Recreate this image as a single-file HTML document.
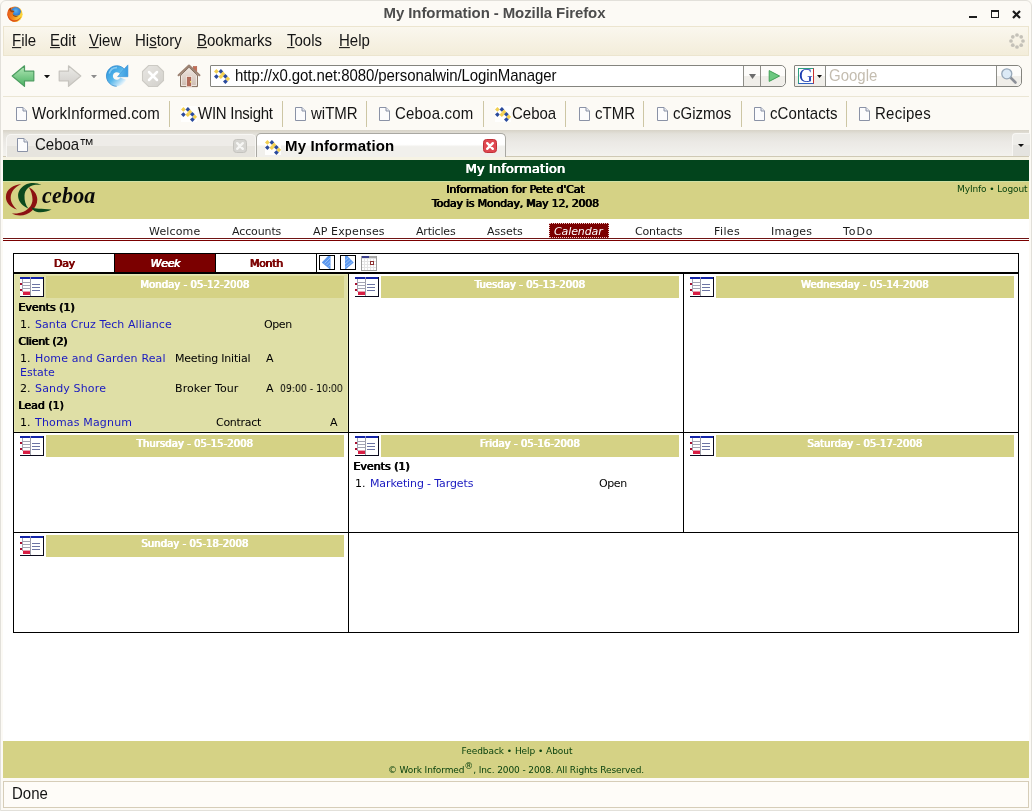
<!DOCTYPE html>
<html>
<head>
<meta charset="utf-8">
<title>My Information - Mozilla Firefox</title>
<style>
html,body{margin:0;padding:0;}
body{width:1032px;height:811px;position:relative;overflow:hidden;background:#fcfaf5;font-family:"DejaVu Sans","Liberation Sans",sans-serif;color:#000;}
.abs{position:absolute;}
.t{position:absolute;white-space:nowrap;line-height:1;will-change:transform;}
.ui{font-family:"Liberation Sans","DejaVu Sans",sans-serif;font-size:15px;color:#141414;transform:scaleY(1.06);transform-origin:0 84.6%;}
.fb{text-shadow:0.9px 0 0 currentColor,0.45px 0 0 currentColor;}
.menu{top:33px;}
.bm{top:106px;}
.bmsep{position:absolute;top:101px;width:1px;height:26px;background:#cdc6a4;}
.nav{top:226px;font-size:11px;color:#1c1c1c;}
.r{font-size:11px;color:#000;}
.lnk{color:#1a1ac0;}
.dh{will-change:transform;position:absolute;height:22px;background:#d5d285;color:#fff;font-size:10px;text-align:center;line-height:22px;white-space:nowrap;}
.ft{left:3px;width:1026px;text-align:center;font-size:9px;color:#0a420e;}
.vl{position:absolute;width:1px;background:#000;}
.hl{position:absolute;height:1px;background:#000;}
</style>
</head>
<body>
<!-- window frame -->
<div class="abs" style="left:0;top:0;width:1032px;height:811px;box-sizing:border-box;border:1px solid #e2e0da;border-radius:6px 6px 0 0;"></div>
<svg class="abs" style="left:7px;top:6px" width="16" height="16" viewBox="0 0 16 16">
<defs><radialGradient id="fx" cx="0.5" cy="0.35" r="0.65"><stop offset="0" stop-color="#5cb4f2"/><stop offset="1" stop-color="#1a5cbc"/></radialGradient>
<linearGradient id="fo" x1="0" y1="0" x2="1" y2="0.3"><stop offset="0" stop-color="#e4521a"/><stop offset="0.55" stop-color="#f48a1c"/><stop offset="1" stop-color="#fcd43a"/></linearGradient></defs>
<circle cx="8" cy="8.2" r="7.6" fill="url(#fo)"/>
<circle cx="8.8" cy="6.4" r="5.3" fill="url(#fx)"/>
<path d="M0.5 6.4C0.9 3.8 2.4 2 4.2 1.6C3.6 2.8 3.8 3.9 4.7 4.6C6.1 4.3 7.2 4.9 7.2 6C6 6.5 5.5 7.6 6.3 8.6C7.6 10 10 10.2 12.2 9C13.3 8 13.8 6.6 13.6 5.4C15 7.5 15.2 10.6 13.6 12.9C11.8 15.4 8.5 16.5 5.5 15.4C2.2 14.2 0.1 10.6 0.5 6.4Z" fill="url(#fo)"/>
<path d="M2.2 3.2C3 2.2 3.6 1.8 4.2 1.6C3.6 2.8 3.8 3.9 4.7 4.6C6.1 4.3 7.2 4.9 7.2 6C6 6.3 5.2 6.4 4.2 6C3.2 5.4 2.4 4.4 2.2 3.2Z" fill="#7a3410" opacity="0.75"/>
<path d="M5.6 8C6.4 9.8 9 10.6 11.6 9.4C9.6 11.4 6 11 5.6 8Z" fill="#4a1c08" opacity="0.8"/>
<path d="M0.6 7.5C1 11 3.4 13.6 6.8 14.2C9.8 14.6 12.4 13.2 13.8 10.6C13.4 13.4 10.4 16 6.8 15.7C3 15.2 0.3 11.6 0.6 7.5Z" fill="#d43c14" opacity="0.8"/>
</svg>
<div class="t ui" style="left:0;width:989px;top:5px;text-align:center;font-weight:bold;color:#4c4c4c;letter-spacing:-0.1px;transform:scaleY(1.02);">My Information - Mozilla Firefox</div>
<div class="abs" style="left:969px;top:16px;width:8px;height:2px;background:#1e1e1e;"></div>
<div class="abs" style="left:991px;top:10px;width:8px;height:8px;box-sizing:border-box;border:1px solid #1e1e1e;border-top-width:2px;"></div>
<svg class="abs" style="left:1012px;top:10px" width="9" height="9" viewBox="0 0 9 9"><path d="M1 1L8 8M8 1L1 8" stroke="#1a1a1a" stroke-width="2.2"/></svg>
<!-- menubar -->
<div class="abs" style="left:3px;top:26px;width:1026px;height:30px;box-sizing:border-box;background:linear-gradient(#faf7ee,#f3edda);border:1px solid #ece5cf;"></div>
<div class="t ui menu" style="left:12px"><u>F</u>ile</div>
<div class="t ui menu" style="left:50px"><u>E</u>dit</div>
<div class="t ui menu" style="left:89px"><u>V</u>iew</div>
<div class="t ui menu" style="left:135px">Hi<u>s</u>tory</div>
<div class="t ui menu" style="left:197px"><u>B</u>ookmarks</div>
<div class="t ui menu" style="left:287px"><u>T</u>ools</div>
<div class="t ui menu" style="left:339px"><u>H</u>elp</div>
<svg class="abs" style="left:1009px;top:33px" width="16" height="16" viewBox="0 0 16 16" fill="#c4c1b8">
<circle cx="8" cy="2" r="1.85"/><circle cx="12.2" cy="3.8" r="1.85"/><circle cx="14" cy="8" r="1.85"/><circle cx="12.2" cy="12.2" r="1.85"/><circle cx="8" cy="14" r="1.85"/><circle cx="3.8" cy="12.2" r="1.85"/><circle cx="2" cy="8" r="1.85"/><circle cx="3.8" cy="3.8" r="1.85"/></svg>
<!-- nav toolbar -->
<div class="abs" style="left:3px;top:96px;width:1026px;height:1px;background:#ebe6d4;"></div>
<svg class="abs" style="left:11px;top:64px" width="24" height="24" viewBox="0 0 24 24">
<defs><linearGradient id="gb" x1="0" y1="0" x2="0" y2="1"><stop offset="0" stop-color="#b4e8b8"/><stop offset="1" stop-color="#48b060"/></linearGradient></defs>
<path d="M1.2 12L13.5 1.8V7.2H22.8V16.8H13.5V22.4Z" fill="url(#gb)" stroke="#4c9c60" stroke-width="1.2" stroke-linejoin="round"/></svg>
<svg class="abs" style="left:44px;top:75px" width="6" height="3.4" viewBox="0 0 6 3.4"><path d="M0 0H6L3 3.4Z" fill="#111"/></svg>
<svg class="abs" style="left:58px;top:64px" width="24" height="24" viewBox="0 0 24 24">
<defs><linearGradient id="gf" x1="0" y1="0" x2="0" y2="1"><stop offset="0" stop-color="#ecebe8"/><stop offset="1" stop-color="#cfcdc8"/></linearGradient></defs>
<path d="M22.8 12L10.5 1.8V7.2H1.2V16.8H10.5V22.4Z" fill="url(#gf)" stroke="#c6c4be" stroke-width="1.2" stroke-linejoin="round"/></svg>
<svg class="abs" style="left:91px;top:75px" width="6" height="3.4" viewBox="0 0 6 3.4"><path d="M0 0H6L3 3.4Z" fill="#8c8c8c"/></svg>
<svg class="abs" style="left:105px;top:64px" width="24" height="24" viewBox="0 0 24 24">
<defs><linearGradient id="gr" x1="0.1" y1="0.1" x2="0.95" y2="0.9"><stop offset="0" stop-color="#2f98de"/><stop offset="0.45" stop-color="#56b6ea"/><stop offset="0.75" stop-color="#b4def6"/><stop offset="0.92" stop-color="#f4fafd"/></linearGradient>
<linearGradient id="gr2" x1="0" y1="0" x2="1" y2="0"><stop offset="0" stop-color="#62bcee"/><stop offset="1" stop-color="#3a9ce0"/></linearGradient></defs>
<path d="M22 12A10.3 10.3 0 1 0 21.25 15.86L15.22 13.42A3.8 3.8 0 1 1 15.5 12Z" fill="url(#gr)"/>
<path d="M20.6 6.8A10.3 10.3 0 1 0 11.7 22.3" fill="none" stroke="#2c86cc" stroke-width="0.9" opacity="0.8"/>
<path d="M22.9 0.9V12.7H12.6L15 10L18.6 5.6Z" fill="url(#gr2)" stroke="#3a94d8" stroke-width="0.6" stroke-linejoin="round"/>
<path d="M4.2 9.5A8 8 0 0 1 12 3.6" fill="none" stroke="#a8dcf8" stroke-width="1.6" opacity="0.7"/>
</svg>
<svg class="abs" style="left:141px;top:64px" width="24" height="24" viewBox="0 0 24 24">
<defs><linearGradient id="gs" x1="0" y1="0" x2="1" y2="1"><stop offset="0" stop-color="#e8e6e2"/><stop offset="1" stop-color="#d2d0cb"/></linearGradient></defs><path d="M7.6 1.5H16.4L22.5 7.6V16.4L16.4 22.5H7.6L1.5 16.4V7.6Z" fill="url(#gs)" stroke="#cccac4" stroke-width="1.1"/>
<path d="M8 8L16 16M16 8L8 16" stroke="#fff" stroke-width="2.5" stroke-linecap="round"/></svg>
<svg class="abs" style="left:177px;top:64px" width="24" height="24" viewBox="0 0 24 24">
<defs><linearGradient id="gh" x1="0" y1="0" x2="0" y2="1"><stop offset="0" stop-color="#f0e8e2"/><stop offset="1" stop-color="#cdbbb0"/></linearGradient></defs>
<rect x="16.2" y="2.4" width="3.6" height="6" fill="#c46c54" stroke="#a85c48" stroke-width="0.5"/>
<path d="M3.6 11.2L12 3.2L20.4 11.2V22.6H3.6Z" fill="url(#gh)" stroke="#7c6656" stroke-width="1"/>
<path d="M4.6 12V21.6H19.4V12" fill="none" stroke="#faf4f0" stroke-width="0.9" opacity="0.9"/>
<path d="M1.6 11.2L12 1.6L22.4 11.2" fill="none" stroke="#9c8272" stroke-width="2.1" stroke-linejoin="round" stroke-linecap="round"/>
<rect x="10.2" y="13" width="3.8" height="9.2" fill="#b46c5a" stroke="#a05848" stroke-width="0.5"/>
<rect x="9.5" y="12.4" width="5.2" height="10" fill="none" stroke="#f6e4dc" stroke-width="0.7"/>
<rect x="13" y="17" width="1.2" height="1.6" fill="#f0e070"/>
</svg>
<!-- url bar -->
<div class="abs" style="left:210px;top:65px;width:576px;height:22px;box-sizing:border-box;border:1px solid #84847e;border-radius:1px 5px 5px 1px;background:#fff;"></div>
<div class="abs" style="left:744px;top:66px;width:41px;height:20px;background:linear-gradient(#fdfcfa 50%,#f0eee9 50%);border-radius:0 5px 5px 0;"></div>
<div class="abs" style="left:743px;top:66px;width:1px;height:20px;background:#8e8e88;"></div>
<div class="abs" style="left:760px;top:66px;width:1px;height:20px;background:#8e8e88;"></div>
<svg class="abs" style="left:749px;top:74px" width="7" height="5" viewBox="0 0 7 5"><path d="M0 0H7L3.5 5Z" fill="#6c6c6c"/></svg>
<svg class="abs" style="left:768px;top:69px" width="13" height="14" viewBox="0 0 13 14"><path d="M1.2 1.6L11.6 7L1.2 12.4Z" fill="#6cc880" stroke="#44a058" stroke-width="1" stroke-linejoin="round"/></svg>
<svg class="abs" style="left:214px;top:68px" width="16" height="16" viewBox="0 0 16 16"><rect width="16" height="16" fill="#fff" opacity="0.9"/><path d="M2.4 1.0L4.8 3.4L2.4 5.8L0.0 3.4Z" fill="#f2d050"/><path d="M6.9 1.0L9.3 3.4L6.9 5.8L4.5 3.4Z" fill="#2a4a9c"/><path d="M2.4 6.199999999999999L4.8 8.6L2.4 11.0L0.0 8.6Z" fill="#2a4a9c"/><path d="M6.8 6.299999999999999L9.2 8.7L6.8 11.1L4.4 8.7Z" fill="#f2d050"/><path d="M9 3.6L11.4 6L9 8.4L6.6 6Z" fill="#f2d050"/><path d="M11.4 5.9L13.8 8.3L11.4 10.700000000000001L9.0 8.3Z" fill="#2a4a9c"/><path d="M13.8 8.5L16.2 10.9L13.8 13.3L11.4 10.9Z" fill="#f2d050"/><path d="M11.4 11.2L13.8 13.6L11.4 16.0L9.0 13.6Z" fill="#2a4a9c"/></svg><div class="t ui" style="left:235px;top:68px;letter-spacing:-0.08px;color:#0a0a0a;">http://x0.got.net:8080/personalwin/LoginManager</div>
<!-- search bar -->
<div class="abs" style="left:794px;top:65px;width:228px;height:22px;box-sizing:border-box;border:1px solid #84847e;border-radius:1px 5px 5px 1px;background:#fff;"></div>
<div class="abs" style="left:795px;top:66px;width:30px;height:20px;background:linear-gradient(#fdfcfa 50%,#f0eee9 50%);"></div>
<div class="abs" style="left:825px;top:66px;width:1px;height:20px;background:#8e8e88;"></div>
<div class="abs" style="left:997px;top:66px;width:24px;height:20px;background:linear-gradient(#fdfcfa 50%,#f0eee9 50%);border-radius:0 5px 5px 0;"></div>
<div class="abs" style="left:996px;top:66px;width:1px;height:20px;background:#8e8e88;"></div>
<div class="abs" style="left:798px;top:68px;width:16px;height:16px;box-sizing:border-box;background:#fff;border:1px solid #30a080;border-right-color:#c83030;border-bottom-color:#3060c0;"></div>
<div class="t" style="left:799px;top:66px;font-family:'Liberation Serif',serif;font-size:19px;color:#1c3cb0;">G</div>
<svg class="abs" style="left:817px;top:75px" width="5" height="3" viewBox="0 0 5 3"><path d="M0 0H5L2.5 3Z" fill="#111"/></svg>
<div class="t ui" style="left:829px;top:68px;color:#c4bdb0;">Google</div>
<svg class="abs" style="left:1000px;top:67px" width="18" height="18" viewBox="0 0 18 18">
<path d="M9 9L15.5 15.5" stroke="#8c9098" stroke-width="2.6" stroke-linecap="round"/>
<circle cx="6.8" cy="6.8" r="5" fill="#dceaf6" stroke="#98a8b8" stroke-width="1.3"/></svg>
<!-- bookmarks toolbar -->
<svg class="abs" style="left:16px;top:107px" width="12" height="15" viewBox="0 0 12 15">
<path d="M0.5 0.5H7L10.5 4V13.5H0.5Z" fill="#fcfcfd" stroke="#8a92a6" stroke-width="1"/>
<path d="M7 0.5V4H10.5" fill="#e6e9f0" stroke="#8a92a6" stroke-width="1"/>
</svg>
<div class="t ui bm" style="left:32px;letter-spacing:0.08px">WorkInformed.com</div>
<svg class="abs" style="left:180.5px;top:106px" width="16" height="16" viewBox="0 0 16 16"><rect width="16" height="16" fill="#fff" opacity="0.9"/><path d="M2.4 1.0L4.8 3.4L2.4 5.8L0.0 3.4Z" fill="#f2d050"/><path d="M6.9 1.0L9.3 3.4L6.9 5.8L4.5 3.4Z" fill="#2a4a9c"/><path d="M2.4 6.199999999999999L4.8 8.6L2.4 11.0L0.0 8.6Z" fill="#2a4a9c"/><path d="M6.8 6.299999999999999L9.2 8.7L6.8 11.1L4.4 8.7Z" fill="#f2d050"/><path d="M9 3.6L11.4 6L9 8.4L6.6 6Z" fill="#f2d050"/><path d="M11.4 5.9L13.8 8.3L11.4 10.700000000000001L9.0 8.3Z" fill="#2a4a9c"/><path d="M13.8 8.5L16.2 10.9L13.8 13.3L11.4 10.9Z" fill="#f2d050"/><path d="M11.4 11.2L13.8 13.6L11.4 16.0L9.0 13.6Z" fill="#2a4a9c"/></svg>
<div class="t ui bm" style="left:198px;letter-spacing:-0.25px">WIN Insight</div>
<svg class="abs" style="left:295px;top:107px" width="12" height="15" viewBox="0 0 12 15">
<path d="M0.5 0.5H7L10.5 4V13.5H0.5Z" fill="#fcfcfd" stroke="#8a92a6" stroke-width="1"/>
<path d="M7 0.5V4H10.5" fill="#e6e9f0" stroke="#8a92a6" stroke-width="1"/>
</svg>
<div class="t ui bm" style="left:311px;letter-spacing:0px">wiTMR</div>
<svg class="abs" style="left:379px;top:107px" width="12" height="15" viewBox="0 0 12 15">
<path d="M0.5 0.5H7L10.5 4V13.5H0.5Z" fill="#fcfcfd" stroke="#8a92a6" stroke-width="1"/>
<path d="M7 0.5V4H10.5" fill="#e6e9f0" stroke="#8a92a6" stroke-width="1"/>
</svg>
<div class="t ui bm" style="left:395px;letter-spacing:0.2px">Ceboa.com</div>
<svg class="abs" style="left:494.5px;top:106px" width="16" height="16" viewBox="0 0 16 16"><rect width="16" height="16" fill="#fff" opacity="0.9"/><path d="M2.4 1.0L4.8 3.4L2.4 5.8L0.0 3.4Z" fill="#f2d050"/><path d="M6.9 1.0L9.3 3.4L6.9 5.8L4.5 3.4Z" fill="#2a4a9c"/><path d="M2.4 6.199999999999999L4.8 8.6L2.4 11.0L0.0 8.6Z" fill="#2a4a9c"/><path d="M6.8 6.299999999999999L9.2 8.7L6.8 11.1L4.4 8.7Z" fill="#f2d050"/><path d="M9 3.6L11.4 6L9 8.4L6.6 6Z" fill="#f2d050"/><path d="M11.4 5.9L13.8 8.3L11.4 10.700000000000001L9.0 8.3Z" fill="#2a4a9c"/><path d="M13.8 8.5L16.2 10.9L13.8 13.3L11.4 10.9Z" fill="#f2d050"/><path d="M11.4 11.2L13.8 13.6L11.4 16.0L9.0 13.6Z" fill="#2a4a9c"/></svg>
<div class="t ui bm" style="left:512px;letter-spacing:0px">Ceboa</div>
<svg class="abs" style="left:579px;top:107px" width="12" height="15" viewBox="0 0 12 15">
<path d="M0.5 0.5H7L10.5 4V13.5H0.5Z" fill="#fcfcfd" stroke="#8a92a6" stroke-width="1"/>
<path d="M7 0.5V4H10.5" fill="#e6e9f0" stroke="#8a92a6" stroke-width="1"/>
</svg>
<div class="t ui bm" style="left:595px;letter-spacing:0px">cTMR</div>
<svg class="abs" style="left:657px;top:107px" width="12" height="15" viewBox="0 0 12 15">
<path d="M0.5 0.5H7L10.5 4V13.5H0.5Z" fill="#fcfcfd" stroke="#8a92a6" stroke-width="1"/>
<path d="M7 0.5V4H10.5" fill="#e6e9f0" stroke="#8a92a6" stroke-width="1"/>
</svg>
<div class="t ui bm" style="left:673px;letter-spacing:0px">cGizmos</div>
<svg class="abs" style="left:754px;top:107px" width="12" height="15" viewBox="0 0 12 15">
<path d="M0.5 0.5H7L10.5 4V13.5H0.5Z" fill="#fcfcfd" stroke="#8a92a6" stroke-width="1"/>
<path d="M7 0.5V4H10.5" fill="#e6e9f0" stroke="#8a92a6" stroke-width="1"/>
</svg>
<div class="t ui bm" style="left:770px;letter-spacing:0.1px">cContacts</div>
<svg class="abs" style="left:859px;top:107px" width="12" height="15" viewBox="0 0 12 15">
<path d="M0.5 0.5H7L10.5 4V13.5H0.5Z" fill="#fcfcfd" stroke="#8a92a6" stroke-width="1"/>
<path d="M7 0.5V4H10.5" fill="#e6e9f0" stroke="#8a92a6" stroke-width="1"/>
</svg>
<div class="t ui bm" style="left:875px;letter-spacing:0.25px">Recipes</div>
<div class="bmsep" style="left:169px"></div>
<div class="bmsep" style="left:282px"></div>
<div class="bmsep" style="left:366px"></div>
<div class="bmsep" style="left:483px"></div>
<div class="bmsep" style="left:565px"></div>
<div class="bmsep" style="left:643px"></div>
<div class="bmsep" style="left:741px"></div>
<div class="bmsep" style="left:846px"></div>
<!-- tab bar -->
<div class="abs" style="left:3px;top:130px;width:1026px;height:27px;background:linear-gradient(#d7d3c7,#e3e1da 4px,#ebe9e5 12px,#f3f2ee 26px);"></div>
<div class="abs" style="left:3px;top:156px;width:1026px;height:1px;background:#cfc9b4;"></div>
<div class="abs" style="left:3px;top:157px;width:1026px;height:3px;background:#f6f3e4;"></div>
<div class="abs" style="left:6px;top:134px;width:250px;height:23px;box-sizing:border-box;border:1px solid #f8f7f4;border-bottom:none;border-radius:5px 5px 0 0;background:linear-gradient(#eeece8 50%,#e6e4de 50%);"></div>
<div class="abs" style="left:256px;top:133px;width:250px;height:24px;box-sizing:border-box;border:1px solid #a9a8a2;border-bottom:none;border-radius:5px 5px 0 0;background:linear-gradient(#ffffff 45%,#f1f0ec 55%);"></div>
<div class="abs" style="left:1012px;top:133px;width:18px;height:23px;box-sizing:border-box;border:1px solid #f8f7f4;border-right:none;border-bottom:none;border-radius:4px 0 0 0;background:linear-gradient(#eeede9 50%,#e5e4e0 50%);"></div>
<svg class="abs" style="left:1018px;top:144px" width="6" height="3" viewBox="0 0 6 3"><path d="M0 0H6L3 3Z" fill="#111"/></svg>
<svg class="abs" style="left:17px;top:138px" width="12" height="15" viewBox="0 0 12 15">
<path d="M0.5 0.5H7L10.5 4V13.5H0.5Z" fill="#fcfcfd" stroke="#8a92a6" stroke-width="1"/>
<path d="M7 0.5V4H10.5" fill="#e6e9f0" stroke="#8a92a6" stroke-width="1"/>
</svg>
<div class="t ui" style="left:35px;top:137px;">Ceboa™</div>
<svg class="abs" style="left:233px;top:139px" width="14" height="14" viewBox="0 0 14 14"><rect x="0.5" y="0.5" width="13" height="13" rx="3" fill="#d6d5d1" stroke="#c4c3be"/><path d="M4.2 4.2L9.8 9.8M9.8 4.2L4.2 9.8" stroke="#f6f6f4" stroke-width="2.4" stroke-linecap="round"/></svg>
<svg class="abs" style="left:265px;top:139px" width="16" height="16" viewBox="0 0 16 16"><rect width="16" height="16" fill="#fff" opacity="0.9"/><path d="M2.4 1.0L4.8 3.4L2.4 5.8L0.0 3.4Z" fill="#f2d050"/><path d="M6.9 1.0L9.3 3.4L6.9 5.8L4.5 3.4Z" fill="#2a4a9c"/><path d="M2.4 6.199999999999999L4.8 8.6L2.4 11.0L0.0 8.6Z" fill="#2a4a9c"/><path d="M6.8 6.299999999999999L9.2 8.7L6.8 11.1L4.4 8.7Z" fill="#f2d050"/><path d="M9 3.6L11.4 6L9 8.4L6.6 6Z" fill="#f2d050"/><path d="M11.4 5.9L13.8 8.3L11.4 10.700000000000001L9.0 8.3Z" fill="#2a4a9c"/><path d="M13.8 8.5L16.2 10.9L13.8 13.3L11.4 10.9Z" fill="#f2d050"/><path d="M11.4 11.2L13.8 13.6L11.4 16.0L9.0 13.6Z" fill="#2a4a9c"/></svg>
<div class="t ui" style="left:285px;top:138px;font-weight:bold;color:#000;letter-spacing:0.13px;transform:scaleY(1.02);">My Information</div>
<svg class="abs" style="left:483px;top:139px" width="14" height="14" viewBox="0 0 14 14"><rect x="0.5" y="0.5" width="13" height="13" rx="3" fill="#e04850" stroke="#c03038"/><path d="M4.2 4.2L9.8 9.8M9.8 4.2L4.2 9.8" stroke="#fff" stroke-width="2.4" stroke-linecap="round"/></svg>
<!-- page content -->
<div class="abs" style="left:3px;top:160px;width:1026px;height:618px;background:#fff;"></div>
<div class="abs" style="left:3px;top:160px;width:1026px;height:21px;background:#02441c;"></div>
<div class="t fb" style="left:2px;width:1026px;top:162px;text-align:center;color:#fff;font-size:13px;letter-spacing:0.1px;">My Information</div>
<div class="abs" style="left:3px;top:181px;width:1026px;height:38px;background:#d5d285;border-top:1px solid #cfe0a4;box-sizing:border-box;"></div>
<svg class="abs" style="left:3px;top:181px" width="100" height="38" viewBox="3 181 100 38">
<path d="M21.3 184.3C14 184.5 6 189 5.9 197C5.9 203 10.5 207.5 17 209.6C13 206 10.5 202 10.7 197.3C11 191.5 15 187 21.3 184.3Z" fill="#8c1212"/>
<path d="M28.8 187.2C33.5 189.5 37.3 194 37.3 199.5C37.3 208 29 215.5 20 215.5C17 215.5 14 214.5 11.7 213.2C15 213.8 19 213.5 23.5 211.7C29 209 32.5 205 32.5 199.5C32.5 195 31 190.5 28.8 187.2Z" fill="#8c1212"/>
<path d="M41.6 185.1C37 182.5 30 182.3 25 185C20.5 187.5 18 191.5 18.1 196C18.3 201.5 22.5 206 28.3 208.5C25.5 205 24.3 200.5 24.5 195.5C24.8 190 29 186 34.1 185.1C36.5 184.6 39 184.7 41.6 185.1Z" fill="#0c4a1e"/>
<path d="M31.5 207.3C35 208.8 41 208.8 51.5 209.5C46 212.6 38 213 34.5 211C33 210 32 208.7 31.5 207.3Z" fill="#0c4a1e"/>
</svg>
<div class="t" style="left:42px;top:185px;font-family:'Liberation Serif',serif;font-style:italic;font-weight:bold;font-size:22px;color:#0a0a0a;letter-spacing:0.2px;transform:scaleY(1.08);transform-origin:0 80%;">ceboa</div>
<div class="t fb" style="left:2px;width:1026px;top:184px;text-align:center;font-size:11px;letter-spacing:-0.15px;">Information for Pete d'Cat</div>
<div class="t fb" style="left:2px;width:1026px;top:198px;text-align:center;font-size:11px;letter-spacing:-0.22px;">Today is Monday, May 12, 2008</div>
<div class="t" style="left:957px;top:185px;font-size:9px;color:#0a420e;letter-spacing:-0.1px;">MyInfo • Logout</div>
<div class="t nav" style="left:149px;letter-spacing:0.15px">Welcome</div>
<div class="t nav" style="left:232px;letter-spacing:-0.12px">Accounts</div>
<div class="t nav" style="left:313px;letter-spacing:0.15px">AP Expenses</div>
<div class="t nav" style="left:416px;letter-spacing:-0.2px">Articles</div>
<div class="t nav" style="left:487px;letter-spacing:0px">Assets</div>
<div class="t nav" style="left:635px;letter-spacing:-0.15px">Contacts</div>
<div class="t nav" style="left:714px;letter-spacing:0.4px">Files</div>
<div class="t nav" style="left:771px;letter-spacing:0.15px">Images</div>
<div class="t nav" style="left:843px;letter-spacing:0.9px">ToDo</div>
<div class="abs" style="left:549px;top:223px;width:60px;height:15px;box-sizing:border-box;background:#7b0000;border:1px dotted #e8c8c8;"></div>
<div class="t nav" style="left:554px;color:#fff;font-style:italic;letter-spacing:-0.1px;">Calendar</div>
<div class="abs" style="left:3px;top:238px;width:1026px;height:1px;background:#701414;"></div>
<div class="abs" style="left:3px;top:240px;width:1026px;height:1px;background:#7b0000;"></div>
<!-- calendar -->
<div class="abs" style="left:14px;top:274px;width:334px;height:158px;background:#dfdfa6;box-shadow:inset 0 0 0 1px #e7e8b4;"></div>
<div class="abs" style="left:114px;top:254px;width:102px;height:18px;background:#7b0000;"></div>
<div class="hl" style="left:13px;top:253px;width:1006px;"></div>
<div class="hl" style="left:13px;top:272px;width:1006px;height:2px;"></div>
<div class="hl" style="left:13px;top:432px;width:1006px;"></div>
<div class="hl" style="left:13px;top:532px;width:1006px;"></div>
<div class="hl" style="left:13px;top:632px;width:1006px;"></div>
<div class="vl" style="left:13px;top:253px;height:380px;"></div>
<div class="vl" style="left:1018px;top:253px;height:380px;"></div>
<div class="vl" style="left:348px;top:272px;height:360px;"></div>
<div class="vl" style="left:683px;top:272px;height:260px;"></div>
<div class="vl" style="left:114px;top:253px;height:20px;"></div>
<div class="vl" style="left:215px;top:253px;height:20px;"></div>
<div class="vl" style="left:316px;top:253px;height:20px;"></div>
<div class="t fb" style="left:14px;width:100px;top:258px;text-align:center;font-size:11px;color:#7b0000;letter-spacing:-0.3px;">Day</div>
<div class="t fb" style="left:114.5px;width:100px;top:258px;text-align:center;font-size:11px;color:#fff;font-style:italic;letter-spacing:-0.3px;">Week</div>
<div class="t fb" style="left:216px;width:100px;top:258px;text-align:center;font-size:11px;color:#7b0000;letter-spacing:-0.3px;">Month</div>
<svg class="abs" style="left:319px;top:255px" width="16" height="15" viewBox="0 0 16 15"><rect x="0.5" y="0.5" width="15" height="14" fill="#fff" stroke="#000"/><path d="M11.5 1L11.5 14H10.5L3 7.8V7.2L9 1Z" fill="#5c98ee"/><path d="M11.5 2.5L5.5 8.5M11.5 6L7.5 10M11.5 9.5L9.5 11.5" stroke="#9cc4f8" stroke-width="0.9"/></svg>
<svg class="abs" style="left:340px;top:255px" width="16" height="15" viewBox="0 0 16 15"><rect x="0.5" y="0.5" width="15" height="14" fill="#fff" stroke="#000"/><path d="M5 1L5 14H6L13.5 7.8V7.2L7.5 1Z" fill="#5c98ee"/><path d="M5 5.5L8.5 2.5M5 9L11 4M5 12.5L12.5 6.5" stroke="#9cc4f8" stroke-width="0.9"/></svg>
<svg class="abs" style="left:361px;top:256px" width="16" height="15" viewBox="0 0 16 15" shape-rendering="crispEdges">
<rect x="0" y="0" width="16" height="15" fill="#9c9c9c"/>
<rect x="1" y="0" width="7" height="2" fill="#3c408c"/>
<rect x="8" y="0" width="7" height="2" fill="#a8a8a8"/>
<rect x="1" y="2" width="14" height="12" fill="#e4e4e4"/>
<g fill="#fff"><rect x="1" y="3" width="2" height="2"/><rect x="4" y="3" width="2" height="2"/><rect x="7" y="3" width="2" height="2"/><rect x="10" y="3" width="2" height="2"/><rect x="13" y="3" width="2" height="2"/>
<rect x="1" y="6" width="2" height="2"/><rect x="4" y="6" width="2" height="2"/><rect x="7" y="6" width="2" height="2"/><rect x="13" y="6" width="2" height="2"/>
<rect x="1" y="9" width="2" height="2"/><rect x="4" y="9" width="2" height="2"/><rect x="7" y="9" width="2" height="2"/><rect x="10" y="9" width="2" height="2"/><rect x="13" y="9" width="2" height="2"/>
<rect x="1" y="12" width="2" height="2"/><rect x="4" y="12" width="2" height="2"/><rect x="7" y="12" width="2" height="2"/><rect x="10" y="12" width="2" height="2"/><rect x="13" y="12" width="2" height="2"/></g>
<rect x="9" y="5" width="4" height="4" fill="#8c3030"/><rect x="10" y="6" width="2" height="2" fill="#fff"/>
</svg>
<svg class="abs" style="left:20px;top:277px" width="24" height="20" viewBox="0 0 24 20" shape-rendering="crispEdges">
<rect x="0" y="0" width="24" height="20" fill="#fff"/>
<rect x="0" y="0" width="23" height="2" fill="#1424a8"/>
<rect x="10" y="0" width="1" height="2" fill="#8a90c8"/>
<rect x="23" y="0" width="1" height="20" fill="#0a0a1e"/>
<rect x="0" y="19" width="24" height="1" fill="#0a0a1e"/>
<rect x="2" y="2" width="1" height="13" fill="#a4a4b4"/>
<rect x="10" y="2" width="1" height="17" fill="#9c9ca8"/>
<rect x="2" y="5" width="9" height="1" fill="#a4a4b4"/>
<rect x="2" y="8" width="9" height="1" fill="#a4a4b4"/>
<rect x="2" y="11" width="9" height="1" fill="#a4a4b4"/>
<rect x="0" y="6" width="2" height="2" fill="#a81030"/>
<rect x="0" y="12" width="2" height="2" fill="#a81030"/>
<rect x="3" y="14" width="7" height="1" fill="#eaa0b0"/>
<rect x="3" y="15" width="7" height="3" fill="#d81e44"/>
<rect x="12" y="7" width="8" height="1" fill="#6c74a4"/>
<rect x="12" y="10" width="8" height="1" fill="#6c74a4"/>
<rect x="12" y="13" width="8" height="1" fill="#6c74a4"/>
</svg>
<div class="dh fb" style="left:46px;top:276px;width:298px;"><span style="position:relative;top:-2px;left:-0.5px;letter-spacing:0.08px">Monday - 05-12-2008</span></div>
<svg class="abs" style="left:355px;top:277px" width="24" height="20" viewBox="0 0 24 20" shape-rendering="crispEdges">
<rect x="0" y="0" width="24" height="20" fill="#fff"/>
<rect x="0" y="0" width="23" height="2" fill="#1424a8"/>
<rect x="10" y="0" width="1" height="2" fill="#8a90c8"/>
<rect x="23" y="0" width="1" height="20" fill="#0a0a1e"/>
<rect x="0" y="19" width="24" height="1" fill="#0a0a1e"/>
<rect x="2" y="2" width="1" height="13" fill="#a4a4b4"/>
<rect x="10" y="2" width="1" height="17" fill="#9c9ca8"/>
<rect x="2" y="5" width="9" height="1" fill="#a4a4b4"/>
<rect x="2" y="8" width="9" height="1" fill="#a4a4b4"/>
<rect x="2" y="11" width="9" height="1" fill="#a4a4b4"/>
<rect x="0" y="6" width="2" height="2" fill="#a81030"/>
<rect x="0" y="12" width="2" height="2" fill="#a81030"/>
<rect x="3" y="14" width="7" height="1" fill="#eaa0b0"/>
<rect x="3" y="15" width="7" height="3" fill="#d81e44"/>
<rect x="12" y="7" width="8" height="1" fill="#6c74a4"/>
<rect x="12" y="10" width="8" height="1" fill="#6c74a4"/>
<rect x="12" y="13" width="8" height="1" fill="#6c74a4"/>
</svg>
<div class="dh fb" style="left:381px;top:276px;width:298px;"><span style="position:relative;top:-2px;left:-0.5px;letter-spacing:0.08px">Tuesday - 05-13-2008</span></div>
<svg class="abs" style="left:690px;top:277px" width="24" height="20" viewBox="0 0 24 20" shape-rendering="crispEdges">
<rect x="0" y="0" width="24" height="20" fill="#fff"/>
<rect x="0" y="0" width="23" height="2" fill="#1424a8"/>
<rect x="10" y="0" width="1" height="2" fill="#8a90c8"/>
<rect x="23" y="0" width="1" height="20" fill="#0a0a1e"/>
<rect x="0" y="19" width="24" height="1" fill="#0a0a1e"/>
<rect x="2" y="2" width="1" height="13" fill="#a4a4b4"/>
<rect x="10" y="2" width="1" height="17" fill="#9c9ca8"/>
<rect x="2" y="5" width="9" height="1" fill="#a4a4b4"/>
<rect x="2" y="8" width="9" height="1" fill="#a4a4b4"/>
<rect x="2" y="11" width="9" height="1" fill="#a4a4b4"/>
<rect x="0" y="6" width="2" height="2" fill="#a81030"/>
<rect x="0" y="12" width="2" height="2" fill="#a81030"/>
<rect x="3" y="14" width="7" height="1" fill="#eaa0b0"/>
<rect x="3" y="15" width="7" height="3" fill="#d81e44"/>
<rect x="12" y="7" width="8" height="1" fill="#6c74a4"/>
<rect x="12" y="10" width="8" height="1" fill="#6c74a4"/>
<rect x="12" y="13" width="8" height="1" fill="#6c74a4"/>
</svg>
<div class="dh fb" style="left:716px;top:276px;width:298px;"><span style="position:relative;top:-2px;left:-0.5px;letter-spacing:0.08px">Wednesday - 05-14-2008</span></div>
<svg class="abs" style="left:20px;top:436px" width="24" height="20" viewBox="0 0 24 20" shape-rendering="crispEdges">
<rect x="0" y="0" width="24" height="20" fill="#fff"/>
<rect x="0" y="0" width="23" height="2" fill="#1424a8"/>
<rect x="10" y="0" width="1" height="2" fill="#8a90c8"/>
<rect x="23" y="0" width="1" height="20" fill="#0a0a1e"/>
<rect x="0" y="19" width="24" height="1" fill="#0a0a1e"/>
<rect x="2" y="2" width="1" height="13" fill="#a4a4b4"/>
<rect x="10" y="2" width="1" height="17" fill="#9c9ca8"/>
<rect x="2" y="5" width="9" height="1" fill="#a4a4b4"/>
<rect x="2" y="8" width="9" height="1" fill="#a4a4b4"/>
<rect x="2" y="11" width="9" height="1" fill="#a4a4b4"/>
<rect x="0" y="6" width="2" height="2" fill="#a81030"/>
<rect x="0" y="12" width="2" height="2" fill="#a81030"/>
<rect x="3" y="14" width="7" height="1" fill="#eaa0b0"/>
<rect x="3" y="15" width="7" height="3" fill="#d81e44"/>
<rect x="12" y="7" width="8" height="1" fill="#6c74a4"/>
<rect x="12" y="10" width="8" height="1" fill="#6c74a4"/>
<rect x="12" y="13" width="8" height="1" fill="#6c74a4"/>
</svg>
<div class="dh fb" style="left:46px;top:435px;width:298px;"><span style="position:relative;top:-2px;left:-0.5px;letter-spacing:0.08px">Thursday - 05-15-2008</span></div>
<svg class="abs" style="left:355px;top:436px" width="24" height="20" viewBox="0 0 24 20" shape-rendering="crispEdges">
<rect x="0" y="0" width="24" height="20" fill="#fff"/>
<rect x="0" y="0" width="23" height="2" fill="#1424a8"/>
<rect x="10" y="0" width="1" height="2" fill="#8a90c8"/>
<rect x="23" y="0" width="1" height="20" fill="#0a0a1e"/>
<rect x="0" y="19" width="24" height="1" fill="#0a0a1e"/>
<rect x="2" y="2" width="1" height="13" fill="#a4a4b4"/>
<rect x="10" y="2" width="1" height="17" fill="#9c9ca8"/>
<rect x="2" y="5" width="9" height="1" fill="#a4a4b4"/>
<rect x="2" y="8" width="9" height="1" fill="#a4a4b4"/>
<rect x="2" y="11" width="9" height="1" fill="#a4a4b4"/>
<rect x="0" y="6" width="2" height="2" fill="#a81030"/>
<rect x="0" y="12" width="2" height="2" fill="#a81030"/>
<rect x="3" y="14" width="7" height="1" fill="#eaa0b0"/>
<rect x="3" y="15" width="7" height="3" fill="#d81e44"/>
<rect x="12" y="7" width="8" height="1" fill="#6c74a4"/>
<rect x="12" y="10" width="8" height="1" fill="#6c74a4"/>
<rect x="12" y="13" width="8" height="1" fill="#6c74a4"/>
</svg>
<div class="dh fb" style="left:381px;top:435px;width:298px;"><span style="position:relative;top:-2px;left:-0.5px;letter-spacing:0.08px">Friday - 05-16-2008</span></div>
<svg class="abs" style="left:690px;top:436px" width="24" height="20" viewBox="0 0 24 20" shape-rendering="crispEdges">
<rect x="0" y="0" width="24" height="20" fill="#fff"/>
<rect x="0" y="0" width="23" height="2" fill="#1424a8"/>
<rect x="10" y="0" width="1" height="2" fill="#8a90c8"/>
<rect x="23" y="0" width="1" height="20" fill="#0a0a1e"/>
<rect x="0" y="19" width="24" height="1" fill="#0a0a1e"/>
<rect x="2" y="2" width="1" height="13" fill="#a4a4b4"/>
<rect x="10" y="2" width="1" height="17" fill="#9c9ca8"/>
<rect x="2" y="5" width="9" height="1" fill="#a4a4b4"/>
<rect x="2" y="8" width="9" height="1" fill="#a4a4b4"/>
<rect x="2" y="11" width="9" height="1" fill="#a4a4b4"/>
<rect x="0" y="6" width="2" height="2" fill="#a81030"/>
<rect x="0" y="12" width="2" height="2" fill="#a81030"/>
<rect x="3" y="14" width="7" height="1" fill="#eaa0b0"/>
<rect x="3" y="15" width="7" height="3" fill="#d81e44"/>
<rect x="12" y="7" width="8" height="1" fill="#6c74a4"/>
<rect x="12" y="10" width="8" height="1" fill="#6c74a4"/>
<rect x="12" y="13" width="8" height="1" fill="#6c74a4"/>
</svg>
<div class="dh fb" style="left:716px;top:435px;width:298px;"><span style="position:relative;top:-2px;left:-0.5px;letter-spacing:0.08px">Saturday - 05-17-2008</span></div>
<svg class="abs" style="left:20px;top:536px" width="24" height="20" viewBox="0 0 24 20" shape-rendering="crispEdges">
<rect x="0" y="0" width="24" height="20" fill="#fff"/>
<rect x="0" y="0" width="23" height="2" fill="#1424a8"/>
<rect x="10" y="0" width="1" height="2" fill="#8a90c8"/>
<rect x="23" y="0" width="1" height="20" fill="#0a0a1e"/>
<rect x="0" y="19" width="24" height="1" fill="#0a0a1e"/>
<rect x="2" y="2" width="1" height="13" fill="#a4a4b4"/>
<rect x="10" y="2" width="1" height="17" fill="#9c9ca8"/>
<rect x="2" y="5" width="9" height="1" fill="#a4a4b4"/>
<rect x="2" y="8" width="9" height="1" fill="#a4a4b4"/>
<rect x="2" y="11" width="9" height="1" fill="#a4a4b4"/>
<rect x="0" y="6" width="2" height="2" fill="#a81030"/>
<rect x="0" y="12" width="2" height="2" fill="#a81030"/>
<rect x="3" y="14" width="7" height="1" fill="#eaa0b0"/>
<rect x="3" y="15" width="7" height="3" fill="#d81e44"/>
<rect x="12" y="7" width="8" height="1" fill="#6c74a4"/>
<rect x="12" y="10" width="8" height="1" fill="#6c74a4"/>
<rect x="12" y="13" width="8" height="1" fill="#6c74a4"/>
</svg>
<div class="dh fb" style="left:46px;top:535px;width:298px;"><span style="position:relative;top:-2px;left:-0.5px;letter-spacing:0.08px">Sunday - 05-18-2008</span></div>
<div class="t r fb" style="left:18px;top:302px;">Events (1)</div>
<div class="t r" style="left:20px;top:319px;">1.</div>
<div class="t r lnk" style="left:35px;top:319px;letter-spacing:0.07px">Santa Cruz Tech Alliance</div>
<div class="t r" style="left:264px;top:319px;letter-spacing:-0.4px">Open</div>
<div class="t r fb" style="left:18px;top:336px;letter-spacing:-0.2px">Client (2)</div>
<div class="t r" style="left:20px;top:353px;">1.</div>
<div class="t r lnk" style="left:35px;top:353px;letter-spacing:0.15px">Home and Garden Real</div>
<div class="t r" style="left:175px;top:353px;letter-spacing:-0.2px">Meeting Initial</div>
<div class="t r" style="left:266px;top:353px;">A</div>
<div class="t r lnk" style="left:20px;top:367px;">Estate</div>
<div class="t r" style="left:20px;top:383px;">2.</div>
<div class="t r lnk" style="left:35px;top:383px;letter-spacing:0.15px">Sandy Shore</div>
<div class="t r" style="left:175px;top:383px;letter-spacing:0.1px">Broker Tour</div>
<div class="t r" style="left:266px;top:383px;">A</div>
<div class="t r" style="left:280px;top:383px;transform:scaleX(0.845);transform-origin:0 50%">09:00 - 10:00</div>
<div class="t r fb" style="left:18px;top:400px;">Lead (1)</div>
<div class="t r" style="left:20px;top:417px;">1.</div>
<div class="t r lnk" style="left:35px;top:417px;letter-spacing:0.17px">Thomas Magnum</div>
<div class="t r" style="left:216px;top:417px;letter-spacing:-0.3px">Contract</div>
<div class="t r" style="left:330px;top:417px;">A</div>
<div class="t r fb" style="left:353px;top:461px;">Events (1)</div>
<div class="t r" style="left:355px;top:478px;">1.</div>
<div class="t r lnk" style="left:370px;top:478px;letter-spacing:-0.12px">Marketing - Targets</div>
<div class="t r" style="left:599px;top:478px;letter-spacing:-0.4px">Open</div>
<!-- footer -->
<div class="abs" style="left:3px;top:741px;width:1026px;height:37px;background:#d5d285;"></div>
<div class="t ft" style="top:747px;left:4px;letter-spacing:-0.05px;">Feedback • Help • About</div>
<div class="t ft" style="top:766px;letter-spacing:-0.11px;">© Work Informed<span style="position:relative;top:-4px;">®</span>, Inc. 2000 - 2008. All Rights Reserved.</div>
<!-- status bar -->
<div class="abs" style="left:3px;top:781px;width:1026px;height:27px;box-sizing:border-box;border:1px solid #d6cdb8;background:#fefcf8;"></div>
<div class="t ui" style="left:12px;top:786px;">Done</div>
</body>
</html>
